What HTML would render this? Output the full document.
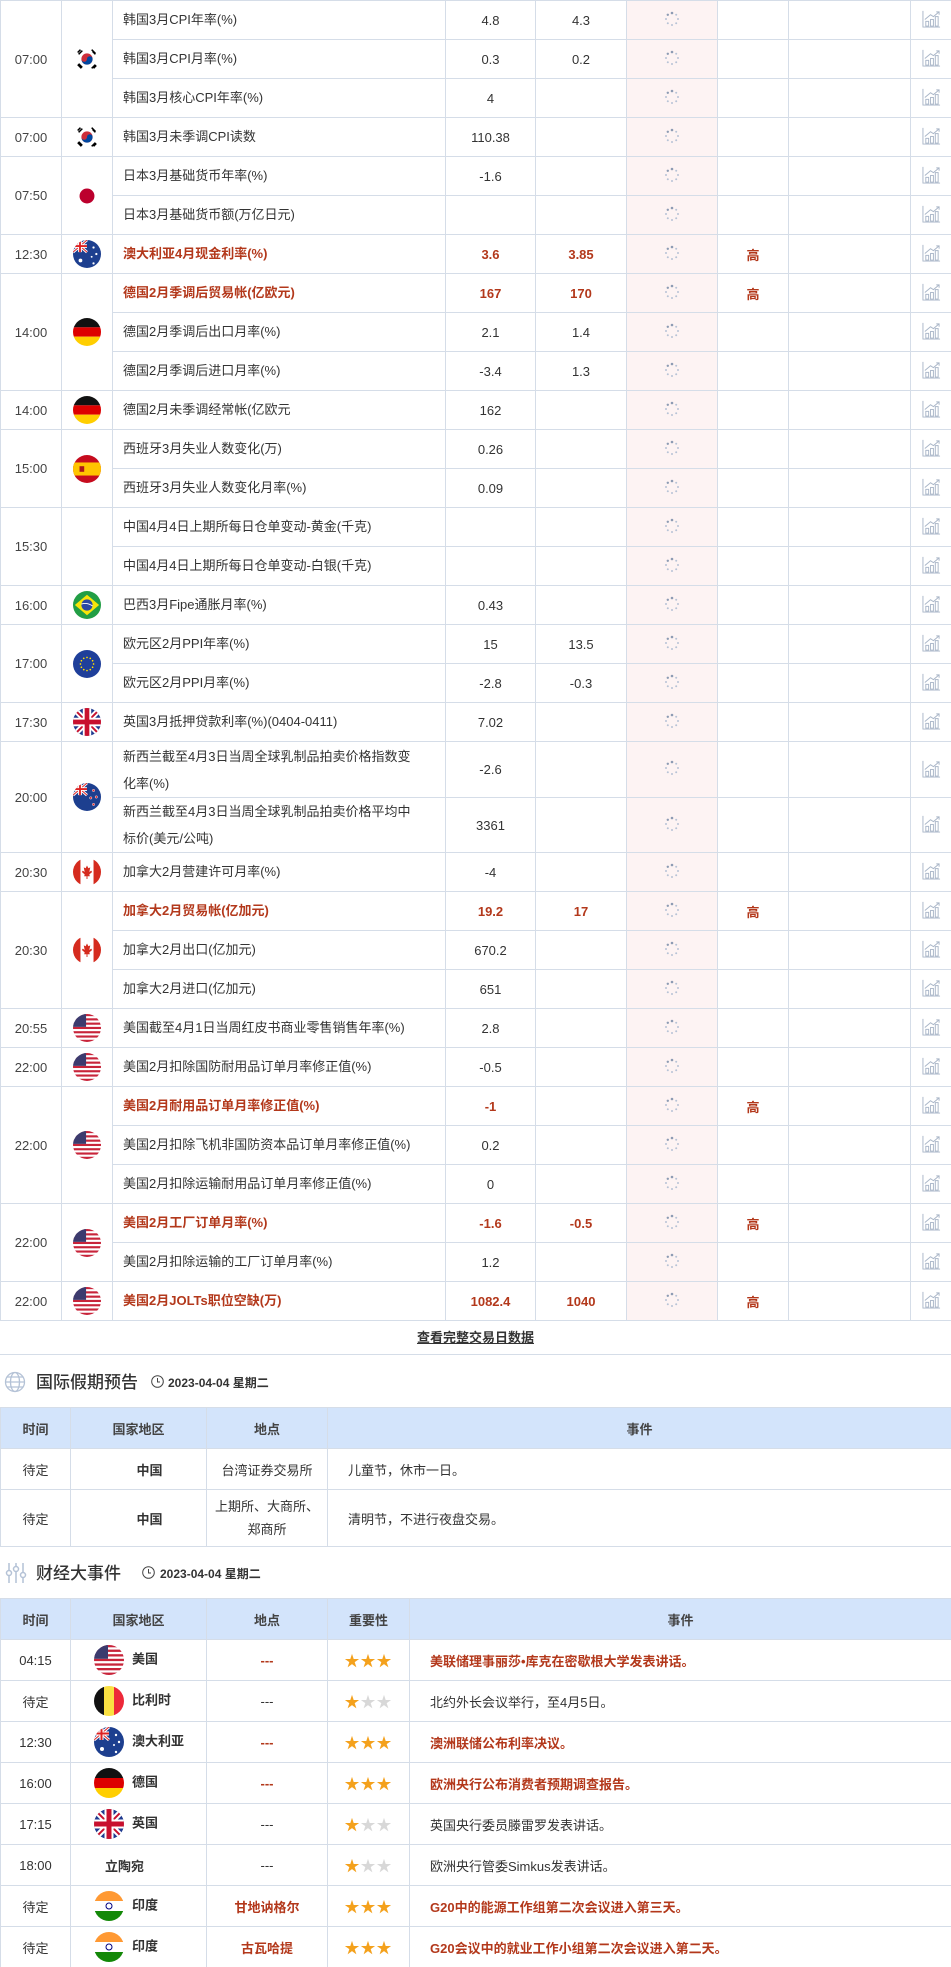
<!DOCTYPE html>
<html><head><meta charset="utf-8">
<style>
*{margin:0;padding:0;box-sizing:border-box}
html,body{width:951px;height:1967px;overflow:hidden;background:#fff;font-family:"Liberation Sans","Noto Sans CJK SC",sans-serif;font-size:13px;color:#333}
table{border-collapse:collapse;table-layout:fixed;width:951px}
td,th{border:1px solid #d5dde8}
#main td{height:39px;vertical-align:middle}
#main td.t{text-align:center;color:#444;font-size:13px}
#main td.f{text-align:center}
#main td.n{padding-left:10px;padding-right:14px;line-height:28px}
#main td.v{text-align:center}
#main td.p{background:#fdf3f3;text-align:center}
#main td.i{text-align:center}
#main td.c{text-align:center}
.r{color:#b3381b;font-weight:bold}
svg.fl{width:28px;height:28px;vertical-align:middle;display:inline-block}
.more{height:34px;border-bottom:1px solid #d5dde8;text-align:center;line-height:34px;font-size:13px;font-weight:bold}
.more span{text-decoration:underline;color:#333}
.hd{height:52px;position:relative}
.hd .tt{position:absolute;left:36px;font-size:17px;color:#333;font-weight:500}
.hd .dt{position:absolute;font-size:12px;font-weight:bold;color:#333}
.tb2 th{background:#d3e4fb;height:41px;font-weight:bold;font-size:13px;color:#444}
.tb2 td{height:41px;text-align:center;vertical-align:middle}
.ev{text-align:left!important;padding-left:20px}
.cty{text-align:left!important;font-weight:bold}
.cty svg{width:30px;height:30px;vertical-align:middle;margin:0 8px 0 23px}
.st{font-size:15px;letter-spacing:1px}
.st b{color:#f4a11c;font-weight:normal}
.st i{color:#d8d8d8;font-style:normal}
</style></head><body>
<svg width="0" height="0" style="position:absolute">
<defs>
<clipPath id="cc"><circle cx="15" cy="15" r="15"/></clipPath>
<symbol id="kr" viewBox="0 0 30 30"><g clip-path="url(#cc)"><rect width="30" height="30" fill="#fff"/><circle cx="15" cy="15" r="6" fill="#cd2e3a"/><path d="M9 15a6 6 0 0 0 12 0a3 3 0 0 0-6 0a3 3 0 0 1-6 0z" fill="#0047a0"/><g stroke="#000" stroke-width="1.6"><path d="M5 8l3-3M6 10l4-4M20 5l4 4M21 7l3 3M5 21l4 4M6 20l4 4M20 25l4-4M22 25l3-3"/></g></g></symbol>
<symbol id="jp" viewBox="0 0 30 30"><g clip-path="url(#cc)"><rect width="30" height="30" fill="#fff"/><circle cx="15" cy="15" r="8" fill="#bc002d"/></g></symbol>
<symbol id="au" viewBox="0 0 30 30"><g clip-path="url(#cc)"><rect width="30" height="30" fill="#1d3f8f"/><path d="M0 0L15 13M15 0L0 13" stroke="#fff" stroke-width="3"/><path d="M0 0L15 13M15 0L0 13" stroke="#d22" stroke-width="1"/><path d="M7.5 0v13M0 6.5h15" stroke="#fff" stroke-width="4"/><path d="M7.5 0v13M0 6.5h15" stroke="#d22" stroke-width="2"/><g fill="#fff"><circle cx="8" cy="22" r="2"/><circle cx="22" cy="8" r="1.2"/><circle cx="25" cy="15" r="1.2"/><circle cx="20" cy="18" r="1"/><circle cx="22" cy="25" r="1.2"/></g></g></symbol>
<symbol id="nz" viewBox="0 0 30 30"><g clip-path="url(#cc)"><rect width="30" height="30" fill="#1d3f8f"/><path d="M0 0L15 13M15 0L0 13" stroke="#fff" stroke-width="3"/><path d="M0 0L15 13M15 0L0 13" stroke="#d22" stroke-width="1"/><path d="M7.5 0v13M0 6.5h15" stroke="#fff" stroke-width="4"/><path d="M7.5 0v13M0 6.5h15" stroke="#d22" stroke-width="2"/><g fill="#d22" stroke="#fff" stroke-width=".5"><circle cx="22" cy="8" r="1.3"/><circle cx="25" cy="15" r="1.3"/><circle cx="19" cy="16" r="1.3"/><circle cx="22" cy="23" r="1.3"/></g></g></symbol>
<symbol id="de" viewBox="0 0 30 30"><g clip-path="url(#cc)"><rect width="30" height="10" fill="#111"/><rect y="10" width="30" height="10" fill="#dd0000"/><rect y="20" width="30" height="10" fill="#ffce00"/></g></symbol>
<symbol id="be" viewBox="0 0 30 30"><g clip-path="url(#cc)"><rect width="10" height="30" fill="#111"/><rect x="10" width="10" height="30" fill="#fae042"/><rect x="20" width="10" height="30" fill="#ed2939"/></g></symbol>
<symbol id="es" viewBox="0 0 30 30"><g clip-path="url(#cc)"><rect width="30" height="30" fill="#c60b1e"/><rect y="8" width="30" height="14" fill="#ffc400"/><rect x="7" y="12" width="5" height="6" fill="#ad1519"/></g></symbol>
<symbol id="br" viewBox="0 0 30 30"><g clip-path="url(#cc)"><rect width="30" height="30" fill="#229e45"/><path d="M15 4L28 15L15 26L2 15z" fill="#f8e509"/><circle cx="15" cy="15" r="6" fill="#2b49a3"/><path d="M9 14q6-2 12 2" stroke="#fff" stroke-width="1" fill="none"/></g></symbol>
<symbol id="eu" viewBox="0 0 30 30"><g clip-path="url(#cc)"><rect width="30" height="30" fill="#1f3f9a"/><g fill="#ffdd00"><circle cx="15" cy="8" r=".9"/><circle cx="18.5" cy="9" r=".9"/><circle cx="21" cy="11.5" r=".9"/><circle cx="22" cy="15" r=".9"/><circle cx="21" cy="18.5" r=".9"/><circle cx="18.5" cy="21" r=".9"/><circle cx="15" cy="22" r=".9"/><circle cx="11.5" cy="21" r=".9"/><circle cx="9" cy="18.5" r=".9"/><circle cx="8" cy="15" r=".9"/><circle cx="9" cy="11.5" r=".9"/><circle cx="11.5" cy="9" r=".9"/></g></g></symbol>
<symbol id="uk" viewBox="0 0 30 30"><g clip-path="url(#cc)"><rect width="30" height="30" fill="#1f3a8f"/><path d="M0 0L30 30M30 0L0 30" stroke="#fff" stroke-width="6"/><path d="M0 0L30 30M30 0L0 30" stroke="#c8102e" stroke-width="2"/><path d="M15 0v30M0 15h30" stroke="#fff" stroke-width="9"/><path d="M15 0v30M0 15h30" stroke="#c8102e" stroke-width="5"/></g></symbol>
<symbol id="us" viewBox="0 0 30 30"><g clip-path="url(#cc)"><rect width="30" height="30" fill="#fff"/><g fill="#c8243a"><rect y="0" width="30" height="2.3"/><rect y="4.6" width="30" height="2.3"/><rect y="9.2" width="30" height="2.3"/><rect y="13.8" width="30" height="2.3"/><rect y="18.4" width="30" height="2.3"/><rect y="23" width="30" height="2.3"/><rect y="27.6" width="30" height="2.4"/></g><rect width="14" height="13.8" fill="#3c3b6e"/></g></symbol>
<symbol id="ca" viewBox="0 0 30 30"><g clip-path="url(#cc)"><rect width="30" height="30" fill="#fff"/><rect width="8" height="30" fill="#d52b1e"/><rect x="22" width="8" height="30" fill="#d52b1e"/><path d="M15 8l1.5 3 2-1-1 5 2-1.5 1 1.5-3 2.5.5 2h-2.5v3h-1v-3H12l.5-2-3-2.5 1-1.5 2 1.5-1-5 2 1z" fill="#d52b1e"/></g></symbol>
<symbol id="in" viewBox="0 0 30 30"><g clip-path="url(#cc)"><rect width="30" height="10" fill="#ff9933"/><rect y="10" width="30" height="10" fill="#fff"/><rect y="20" width="30" height="10" fill="#138808"/><circle cx="15" cy="15" r="3" fill="none" stroke="#000080" stroke-width="1"/></g></symbol>
<symbol id="sp" viewBox="0 0 16 16"><g fill="#b7c3d6"><circle cx="8" cy="2" r="1.3" fill="#8d9bb3"/><circle cx="12.2" cy="3.8" r="1"/><circle cx="14" cy="8" r="1"/><circle cx="12.2" cy="12.2" r="1"/><circle cx="8" cy="14" r="1"/><circle cx="3.8" cy="12.2" r="1"/><circle cx="2" cy="8" r="1"/><circle cx="3.8" cy="3.8" r="1.2" fill="#8d9bb3"/></g></symbol>
<symbol id="ch" viewBox="0 0 20 20"><g fill="none" stroke="#aab6c8" stroke-width="1"><path d="M1 2v17h18"/><rect x="4" y="13" width="3" height="5"/><rect x="9" y="11" width="3" height="7"/><rect x="14" y="8" width="3" height="10"/><path d="M3 11l6-5 3 2 6-5M15 3h3v3"/></g></symbol>
</defs></svg>

<table id="main">
<colgroup><col style="width:61px"><col style="width:51px"><col style="width:333px"><col style="width:90px"><col style="width:91px"><col style="width:91px"><col style="width:71px"><col style="width:122px"><col style="width:41px"></colgroup>
<tbody>
<tr><td class="t" rowspan="3">07:00</td><td class="f" rowspan="3"><svg class="fl"><use href="#kr"/></svg></td><td class="n">韩国3月CPI年率(%)</td><td class="v">4.8</td><td class="v">4.3</td><td class="p"><svg width="16" height="16"><use href="#sp"/></svg></td><td class="i"></td><td></td><td class="c"><svg width="19" height="19"><use href="#ch"/></svg></td></tr>
<tr><td class="n">韩国3月CPI月率(%)</td><td class="v">0.3</td><td class="v">0.2</td><td class="p"><svg width="16" height="16"><use href="#sp"/></svg></td><td class="i"></td><td></td><td class="c"><svg width="19" height="19"><use href="#ch"/></svg></td></tr>
<tr><td class="n">韩国3月核心CPI年率(%)</td><td class="v">4</td><td class="v"></td><td class="p"><svg width="16" height="16"><use href="#sp"/></svg></td><td class="i"></td><td></td><td class="c"><svg width="19" height="19"><use href="#ch"/></svg></td></tr>
<tr><td class="t">07:00</td><td class="f"><svg class="fl"><use href="#kr"/></svg></td><td class="n">韩国3月未季调CPI读数</td><td class="v">110.38</td><td class="v"></td><td class="p"><svg width="16" height="16"><use href="#sp"/></svg></td><td class="i"></td><td></td><td class="c"><svg width="19" height="19"><use href="#ch"/></svg></td></tr>
<tr><td class="t" rowspan="2">07:50</td><td class="f" rowspan="2"><svg class="fl"><use href="#jp"/></svg></td><td class="n">日本3月基础货币年率(%)</td><td class="v">-1.6</td><td class="v"></td><td class="p"><svg width="16" height="16"><use href="#sp"/></svg></td><td class="i"></td><td></td><td class="c"><svg width="19" height="19"><use href="#ch"/></svg></td></tr>
<tr><td class="n">日本3月基础货币额(万亿日元)</td><td class="v"></td><td class="v"></td><td class="p"><svg width="16" height="16"><use href="#sp"/></svg></td><td class="i"></td><td></td><td class="c"><svg width="19" height="19"><use href="#ch"/></svg></td></tr>
<tr><td class="t">12:30</td><td class="f"><svg class="fl"><use href="#au"/></svg></td><td class="n r">澳大利亚4月现金利率(%)</td><td class="v r">3.6</td><td class="v r">3.85</td><td class="p"><svg width="16" height="16"><use href="#sp"/></svg></td><td class="i r">高</td><td></td><td class="c"><svg width="19" height="19"><use href="#ch"/></svg></td></tr>
<tr><td class="t" rowspan="3">14:00</td><td class="f" rowspan="3"><svg class="fl"><use href="#de"/></svg></td><td class="n r">德国2月季调后贸易帐(亿欧元)</td><td class="v r">167</td><td class="v r">170</td><td class="p"><svg width="16" height="16"><use href="#sp"/></svg></td><td class="i r">高</td><td></td><td class="c"><svg width="19" height="19"><use href="#ch"/></svg></td></tr>
<tr><td class="n">德国2月季调后出口月率(%)</td><td class="v">2.1</td><td class="v">1.4</td><td class="p"><svg width="16" height="16"><use href="#sp"/></svg></td><td class="i"></td><td></td><td class="c"><svg width="19" height="19"><use href="#ch"/></svg></td></tr>
<tr><td class="n">德国2月季调后进口月率(%)</td><td class="v">-3.4</td><td class="v">1.3</td><td class="p"><svg width="16" height="16"><use href="#sp"/></svg></td><td class="i"></td><td></td><td class="c"><svg width="19" height="19"><use href="#ch"/></svg></td></tr>
<tr><td class="t">14:00</td><td class="f"><svg class="fl"><use href="#de"/></svg></td><td class="n">德国2月未季调经常帐(亿欧元</td><td class="v">162</td><td class="v"></td><td class="p"><svg width="16" height="16"><use href="#sp"/></svg></td><td class="i"></td><td></td><td class="c"><svg width="19" height="19"><use href="#ch"/></svg></td></tr>
<tr><td class="t" rowspan="2">15:00</td><td class="f" rowspan="2"><svg class="fl"><use href="#es"/></svg></td><td class="n">西班牙3月失业人数变化(万)</td><td class="v">0.26</td><td class="v"></td><td class="p"><svg width="16" height="16"><use href="#sp"/></svg></td><td class="i"></td><td></td><td class="c"><svg width="19" height="19"><use href="#ch"/></svg></td></tr>
<tr><td class="n">西班牙3月失业人数变化月率(%)</td><td class="v">0.09</td><td class="v"></td><td class="p"><svg width="16" height="16"><use href="#sp"/></svg></td><td class="i"></td><td></td><td class="c"><svg width="19" height="19"><use href="#ch"/></svg></td></tr>
<tr><td class="t" rowspan="2">15:30</td><td class="f" rowspan="2"></td><td class="n">中国4月4日上期所每日仓单变动-黄金(千克)</td><td class="v"></td><td class="v"></td><td class="p"><svg width="16" height="16"><use href="#sp"/></svg></td><td class="i"></td><td></td><td class="c"><svg width="19" height="19"><use href="#ch"/></svg></td></tr>
<tr><td class="n">中国4月4日上期所每日仓单变动-白银(千克)</td><td class="v"></td><td class="v"></td><td class="p"><svg width="16" height="16"><use href="#sp"/></svg></td><td class="i"></td><td></td><td class="c"><svg width="19" height="19"><use href="#ch"/></svg></td></tr>
<tr><td class="t">16:00</td><td class="f"><svg class="fl"><use href="#br"/></svg></td><td class="n">巴西3月Fipe通胀月率(%)</td><td class="v">0.43</td><td class="v"></td><td class="p"><svg width="16" height="16"><use href="#sp"/></svg></td><td class="i"></td><td></td><td class="c"><svg width="19" height="19"><use href="#ch"/></svg></td></tr>
<tr><td class="t" rowspan="2">17:00</td><td class="f" rowspan="2"><svg class="fl"><use href="#eu"/></svg></td><td class="n">欧元区2月PPI年率(%)</td><td class="v">15</td><td class="v">13.5</td><td class="p"><svg width="16" height="16"><use href="#sp"/></svg></td><td class="i"></td><td></td><td class="c"><svg width="19" height="19"><use href="#ch"/></svg></td></tr>
<tr><td class="n">欧元区2月PPI月率(%)</td><td class="v">-2.8</td><td class="v">-0.3</td><td class="p"><svg width="16" height="16"><use href="#sp"/></svg></td><td class="i"></td><td></td><td class="c"><svg width="19" height="19"><use href="#ch"/></svg></td></tr>
<tr><td class="t">17:30</td><td class="f"><svg class="fl"><use href="#uk"/></svg></td><td class="n">英国3月抵押贷款利率(%)(0404-0411)</td><td class="v">7.02</td><td class="v"></td><td class="p"><svg width="16" height="16"><use href="#sp"/></svg></td><td class="i"></td><td></td><td class="c"><svg width="19" height="19"><use href="#ch"/></svg></td></tr>
<tr><td class="t" rowspan="2">20:00</td><td class="f" rowspan="2"><svg class="fl"><use href="#nz"/></svg></td><td class="n" style="height:56px;line-height:27px;padding-right:22px">新西兰截至4月3日当周全球乳制品拍卖价格指数变化率(%)</td><td class="v">-2.6</td><td class="v"></td><td class="p"><svg width="16" height="16"><use href="#sp"/></svg></td><td class="i"></td><td></td><td class="c"><svg width="19" height="19"><use href="#ch"/></svg></td></tr>
<tr><td class="n" style="height:55px;line-height:27px;padding-right:22px">新西兰截至4月3日当周全球乳制品拍卖价格平均中标价(美元/公吨)</td><td class="v">3361</td><td class="v"></td><td class="p"><svg width="16" height="16"><use href="#sp"/></svg></td><td class="i"></td><td></td><td class="c"><svg width="19" height="19"><use href="#ch"/></svg></td></tr>
<tr><td class="t">20:30</td><td class="f"><svg class="fl"><use href="#ca"/></svg></td><td class="n">加拿大2月营建许可月率(%)</td><td class="v">-4</td><td class="v"></td><td class="p"><svg width="16" height="16"><use href="#sp"/></svg></td><td class="i"></td><td></td><td class="c"><svg width="19" height="19"><use href="#ch"/></svg></td></tr>
<tr><td class="t" rowspan="3">20:30</td><td class="f" rowspan="3"><svg class="fl"><use href="#ca"/></svg></td><td class="n r">加拿大2月贸易帐(亿加元)</td><td class="v r">19.2</td><td class="v r">17</td><td class="p"><svg width="16" height="16"><use href="#sp"/></svg></td><td class="i r">高</td><td></td><td class="c"><svg width="19" height="19"><use href="#ch"/></svg></td></tr>
<tr><td class="n">加拿大2月出口(亿加元)</td><td class="v">670.2</td><td class="v"></td><td class="p"><svg width="16" height="16"><use href="#sp"/></svg></td><td class="i"></td><td></td><td class="c"><svg width="19" height="19"><use href="#ch"/></svg></td></tr>
<tr><td class="n">加拿大2月进口(亿加元)</td><td class="v">651</td><td class="v"></td><td class="p"><svg width="16" height="16"><use href="#sp"/></svg></td><td class="i"></td><td></td><td class="c"><svg width="19" height="19"><use href="#ch"/></svg></td></tr>
<tr><td class="t">20:55</td><td class="f"><svg class="fl"><use href="#us"/></svg></td><td class="n">美国截至4月1日当周红皮书商业零售销售年率(%)</td><td class="v">2.8</td><td class="v"></td><td class="p"><svg width="16" height="16"><use href="#sp"/></svg></td><td class="i"></td><td></td><td class="c"><svg width="19" height="19"><use href="#ch"/></svg></td></tr>
<tr><td class="t">22:00</td><td class="f"><svg class="fl"><use href="#us"/></svg></td><td class="n">美国2月扣除国防耐用品订单月率修正值(%)</td><td class="v">-0.5</td><td class="v"></td><td class="p"><svg width="16" height="16"><use href="#sp"/></svg></td><td class="i"></td><td></td><td class="c"><svg width="19" height="19"><use href="#ch"/></svg></td></tr>
<tr><td class="t" rowspan="3">22:00</td><td class="f" rowspan="3"><svg class="fl"><use href="#us"/></svg></td><td class="n r">美国2月耐用品订单月率修正值(%)</td><td class="v r">-1</td><td class="v"></td><td class="p"><svg width="16" height="16"><use href="#sp"/></svg></td><td class="i r">高</td><td></td><td class="c"><svg width="19" height="19"><use href="#ch"/></svg></td></tr>
<tr><td class="n">美国2月扣除飞机非国防资本品订单月率修正值(%)</td><td class="v">0.2</td><td class="v"></td><td class="p"><svg width="16" height="16"><use href="#sp"/></svg></td><td class="i"></td><td></td><td class="c"><svg width="19" height="19"><use href="#ch"/></svg></td></tr>
<tr><td class="n">美国2月扣除运输耐用品订单月率修正值(%)</td><td class="v">0</td><td class="v"></td><td class="p"><svg width="16" height="16"><use href="#sp"/></svg></td><td class="i"></td><td></td><td class="c"><svg width="19" height="19"><use href="#ch"/></svg></td></tr>
<tr><td class="t" rowspan="2">22:00</td><td class="f" rowspan="2"><svg class="fl"><use href="#us"/></svg></td><td class="n r">美国2月工厂订单月率(%)</td><td class="v r">-1.6</td><td class="v r">-0.5</td><td class="p"><svg width="16" height="16"><use href="#sp"/></svg></td><td class="i r">高</td><td></td><td class="c"><svg width="19" height="19"><use href="#ch"/></svg></td></tr>
<tr><td class="n">美国2月扣除运输的工厂订单月率(%)</td><td class="v">1.2</td><td class="v"></td><td class="p"><svg width="16" height="16"><use href="#sp"/></svg></td><td class="i"></td><td></td><td class="c"><svg width="19" height="19"><use href="#ch"/></svg></td></tr>
<tr><td class="t">22:00</td><td class="f"><svg class="fl"><use href="#us"/></svg></td><td class="n r">美国2月JOLTs职位空缺(万)</td><td class="v r">1082.4</td><td class="v r">1040</td><td class="p"><svg width="16" height="16"><use href="#sp"/></svg></td><td class="i r">高</td><td></td><td class="c"><svg width="19" height="19"><use href="#ch"/></svg></td></tr>
</tbody></table>

<div class="more"><span>查看完整交易日数据</span></div>

<div class="hd">
<svg style="position:absolute;left:4px;top:16px" width="22" height="22" viewBox="0 0 22 22"><g fill="none" stroke="#b4c2d6" stroke-width="1.3"><circle cx="11" cy="11" r="9.5"/><ellipse cx="11" cy="11" rx="4.5" ry="9.5"/><path d="M1.5 11h19M3 6h16M3 16h16"/></g></svg>
<span class="tt" style="top:13px">国际假期预告</span>
<svg style="position:absolute;left:151px;top:20px" width="13" height="13" viewBox="0 0 13 13"><circle cx="6.5" cy="6.5" r="5.8" fill="none" stroke="#444" stroke-width="1"/><path d="M6.5 3v4h2.5" fill="none" stroke="#444" stroke-width="1"/></svg>
<span class="dt" style="left:168px;top:19px">2023-04-04 星期二</span>
</div>

<table class="tb2">
<colgroup><col style="width:70px"><col style="width:136px"><col style="width:121px"><col style="width:624px"></colgroup>
<tr><th>时间</th><th>国家地区</th><th>地点</th><th>事件</th></tr>
<tr><td>待定</td><td style="font-weight:bold;padding-left:22px">中国</td><td>台湾证券交易所</td><td class="ev">儿童节，休市一日。</td></tr>
<tr><td style="height:57px">待定</td><td style="font-weight:bold;padding-left:22px">中国</td><td style="line-height:23px;padding:0 4px">上期所、大商所、郑商所</td><td class="ev">清明节，不进行夜盘交易。</td></tr>
</table>

<div class="hd" style="height:51px">
<svg style="position:absolute;left:5px;top:15px" width="22" height="22" viewBox="0 0 22 22"><g fill="none" stroke="#b4c2d6" stroke-width="1.5"><path d="M4 1v7M4 14v7M11 1v3M11 10v11M18 1v9M18 16v5"/><circle cx="4" cy="11" r="2.5"/><circle cx="11" cy="7" r="2.5"/><circle cx="18" cy="13" r="2.5"/></g></svg>
<span class="tt" style="top:12px">财经大事件</span>
<svg style="position:absolute;left:142px;top:19px" width="13" height="13" viewBox="0 0 13 13"><circle cx="6.5" cy="6.5" r="5.8" fill="none" stroke="#444" stroke-width="1"/><path d="M6.5 3v4h2.5" fill="none" stroke="#444" stroke-width="1"/></svg>
<span class="dt" style="left:160px;top:18px">2023-04-04 星期二</span>
</div>

<table class="tb2">
<colgroup><col style="width:70px"><col style="width:136px"><col style="width:121px"><col style="width:82px"><col style="width:542px"></colgroup>
<tr><th>时间</th><th>国家地区</th><th>地点</th><th>重要性</th><th>事件</th></tr>
<tr><td>04:15</td><td class="cty"><svg><use href="#us"/></svg>美国</td><td class="r">---</td><td class="st"><b>★★★</b></td><td class="ev r">美联储理事丽莎•库克在密歇根大学发表讲话。</td></tr>
<tr><td>待定</td><td class="cty"><svg><use href="#be"/></svg>比利时</td><td>---</td><td class="st"><b>★</b><i>★★</i></td><td class="ev">北约外长会议举行，至4月5日。</td></tr>
<tr><td>12:30</td><td class="cty"><svg><use href="#au"/></svg>澳大利亚</td><td class="r">---</td><td class="st"><b>★★★</b></td><td class="ev r">澳洲联储公布利率决议。</td></tr>
<tr><td>16:00</td><td class="cty"><svg><use href="#de"/></svg>德国</td><td class="r">---</td><td class="st"><b>★★★</b></td><td class="ev r">欧洲央行公布消费者预期调查报告。</td></tr>
<tr><td>17:15</td><td class="cty"><svg><use href="#uk"/></svg>英国</td><td>---</td><td class="st"><b>★</b><i>★★</i></td><td class="ev">英国央行委员滕雷罗发表讲话。</td></tr>
<tr><td>18:00</td><td class="cty" style="padding-left:34px">立陶宛</td><td>---</td><td class="st"><b>★</b><i>★★</i></td><td class="ev">欧洲央行管委Simkus发表讲话。</td></tr>
<tr><td>待定</td><td class="cty"><svg><use href="#in"/></svg>印度</td><td class="r">甘地讷格尔</td><td class="st"><b>★★★</b></td><td class="ev r">G20中的能源工作组第二次会议进入第三天。</td></tr>
<tr><td>待定</td><td class="cty"><svg><use href="#in"/></svg>印度</td><td class="r">古瓦哈提</td><td class="st"><b>★★★</b></td><td class="ev r">G20会议中的就业工作小组第二次会议进入第二天。</td></tr>
</table>
</body></html>
